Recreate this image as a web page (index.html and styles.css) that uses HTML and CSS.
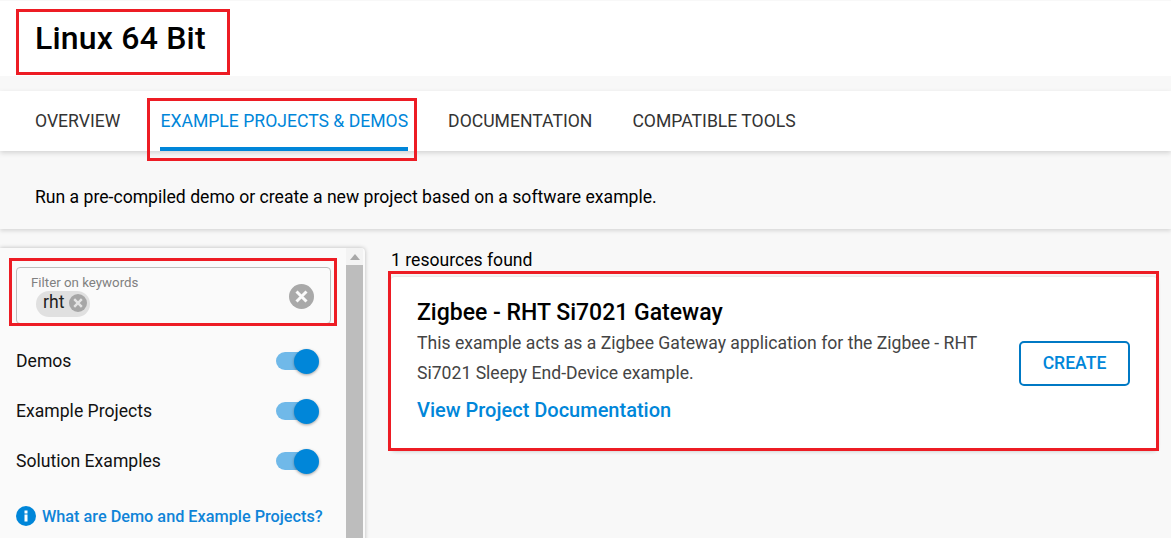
FILE: index.html
```html
<!DOCTYPE html>
<html>

<head>
    <title>Linux 64 Bit</title>
    <meta content="width=device-width, initial-scale=1" name="viewport" />
    <meta http-equiv="Content-Type" content="text/html; charset=utf-8" />
    <link rel="stylesheet" href="styles.css">
</head>

<body>
    <div id="contents">
        <div id="header">
            <h1>Linux 64 Bit</h1>
        </div>
        <div id="tabs">
            <a class="tab">OVERVIEW</a>
            <a class="tab active">EXAMPLE PROJECTS &amp; DEMOS</a>
            <a class="tab">DOCUMENTATION</a>
            <a class="tab">COMPATIBLE TOOLS</a>
        </div>
        <div id="intro">Run a pre-compiled demo or create a new project based on a software example.</div>
        <div id="main">
            <div id="sidebar">
                <div id="filters">
                    <div id="search">
                        <div id="search-left">
                            <label>Filter on keywords</label>
                            <span class="chip"><span class="chip-text">rht</span>
                                <svg class="chip-x" viewBox="0 0 18 18">
                                    <circle cx="9" cy="9" r="9" fill="#a6a6a6" />
                                    <path d="M5.2 5.2l7.6 7.6M12.8 5.2l-7.6 7.6" stroke="#e4e4e4" stroke-width="2.400" />
                                </svg>
                            </span>
                        </div>
                        <svg class="clear-x" viewBox="0 0 25 25">
                            <circle cx="12.5" cy="12.5" r="12.5" fill="#a9a9a9" />
                            <path d="M7.5 7.5l10 10M17.500 7.500l-10 10" stroke="#fafafa" stroke-width="3" />
                        </svg>
                    </div>
                    <div class="toggle-row">
                        <span>Demos</span>
                        <span class="toggle"><i></i></span>
                    </div>
                    <div class="toggle-row">
                        <span>Example Projects</span>
                        <span class="toggle"><i></i></span>
                    </div>
                    <div class="toggle-row">
                        <span>Solution Examples</span>
                        <span class="toggle"><i></i></span>
                    </div>
                    <a id="help">
                        <svg viewBox="0 0 20 20">
                            <circle cx="10" cy="10" r="10" fill="#0086d9" />
                            <rect x="8.500" y="8.500" width="3" height="7" fill="#fff" />
                            <rect x="8.500" y="4.500" width="3" height="3" fill="#fff" />
                        </svg>
                        What are Demo and Example Projects?
                    </a>
                </div>
                <div id="scrollbar">
                    <div id="scroll-up"></div>
                    <div id="scroll-thumb"></div>
                </div>
            </div>
            <div id="results">
                <p id="count">1 resources found</p>
                <div id="card">
                    <div id="card-text">
                        <h3>Zigbee - RHT Si7021 Gateway</h3>
                        <p>This example acts as a Zigbee Gateway application for the Zigbee - RHT Si7021 Sleepy End-Device example.</p>
                        <a>View Project Documentation</a>
                    </div>
                    <button id="create">CREATE</button>
                </div>
            </div>
        </div>

        <div class="mark" id="mark-title"></div>
        <div class="mark" id="mark-tab"></div>
        <div class="mark" id="mark-search"></div>
        <div class="mark" id="mark-card"></div>
    </div>
</body>

</html>
```

FILE: styles.css
```css
* {
    margin: 0;
    padding: 0;
    box-sizing: border-box;
}

html,
body {
    font-family: Roboto, 'Liberation Sans', sans-serif;
    height: 100%;
    width: 100%;
    overflow: hidden;
    background: #f8f8f8;
}

#contents {
    height: 538px;
    overflow: hidden;
    position: relative;
    width: 100%;
}

#header {
    align-items: center;
    background: white;
    display: flex;
    height: 75px;
    margin-top: 1px;
    padding: 0 0 2px 35px;
}

#header h1 {
    color: black;
    font-size: 32px;
    font-weight: 500;
    letter-spacing: 0.2px;
}

#tabs {
    background: white;
    box-shadow: 0 2px 5px rgba(0, 0, 0, 0.15);
    display: flex;
    gap: 40px;
    height: 60px;
    margin-top: 15px;
    padding-left: 35px;
    position: relative;
}

#tabs .tab {
    color: #333333;
    font-size: 17.6px;
    line-height: 60px;
}

#tabs .tab.active {
    border-bottom: 4px solid #0086d9;
    color: #0086d9;
}

#intro {
    box-shadow: 0 2px 4px rgba(0, 0, 0, 0.13);
    color: black;
    font-size: 17.6px;
    height: 78px;
    line-height: 92px;
    padding-left: 35px;
}

#main {
    display: flex;
    padding-top: 19px;
}

#sidebar {
    background: #fafafa;
    border-radius: 0 4px 0 0;
    box-shadow: 0 0 4px rgba(0, 0, 0, 0.25);
    display: flex;
    flex: none;
    height: 300px;
    width: 365px;
}

#filters {
    padding: 19px 0 0 16px;
    width: 346px;
}

#search {
    align-items: center;
    border: 1px solid #bdbdbd;
    border-radius: 4px;
    display: flex;
    height: 57px;
    justify-content: space-between;
    padding: 2px 16px 0 14px;
    width: 315px;
}

#search-left {
    display: flex;
    flex-direction: column;
    align-items: flex-start;
    margin-top: -1px;
}

#search label {
    color: #808080;
    display: block;
    font-size: 13.3px;
    line-height: 16px;
}

.chip {
    align-items: center;
    background: #e0e0e0;
    border-radius: 13px;
    color: #222222;
    display: flex;
    font-size: 17.6px;
    gap: 5px;
    height: 26px;
    margin-left: 5px;
    padding-left: 7px;
    width: 54px;
}

.chip-text {
    margin-top: -4px;
}

.chip-x {
    height: 18px;
    margin-top: -2px;
    width: 18px;
}

.clear-x {
    height: 25px;
    width: 25px;
}

.toggle-row {
    align-items: center;
    color: #111111;
    display: flex;
    font-size: 17.6px;
    height: 50px;
    justify-content: space-between;
    width: 296px;
}

#search + .toggle-row {
    margin-top: 12px;
}

.toggle {
    background: #70b9e9;
    border-radius: 9px;
    display: block;
    height: 18px;
    position: relative;
    width: 36px;
}

.toggle i {
    background: #0086d9;
    border-radius: 50%;
    box-shadow: 0 1px 3px rgba(0, 0, 0, 0.35);
    display: block;
    height: 25px;
    position: absolute;
    right: -7px;
    top: -3px;
    width: 25px;
}

#help {
    align-items: center;
    color: #0f84d8;
    display: flex;
    font-size: 16.25px;
    font-weight: 500;
    gap: 6px;
    margin-top: 20px;
}

#help svg {
    height: 20px;
    width: 20px;
}

#scrollbar {
    background: #f3f3f3;
    height: 100%;
    margin-left: 0;
    width: 17px;
}

#scroll-up {
    border-bottom: 6px solid #a8a8a8;
    border-left: 5px solid transparent;
    border-right: 5px solid transparent;
    height: 0;
    margin: 6px auto 0;
    width: 0;
}

#scroll-thumb {
    background: #bdbdbd;
    height: 100%;
    margin-top: 5px;
}

#results {
    flex: 1;
    padding: 0 14px 0 26px;
}

#count {
    color: black;
    font-size: 17.6px;
    line-height: 22px;
    padding-top: 1px;
}

#card {
    align-items: center;
    background: white;
    border-radius: 4px;
    box-shadow: 0 1px 4px rgba(0, 0, 0, 0.22);
    display: flex;
    height: 173px;
    justify-content: space-between;
    margin-top: 6px;
    padding: 0 27px 6px 26px;
}

#card-text {
    width: 575px;
}

#card h3 {
    color: black;
    font-size: 23px;
    font-weight: 500;
    line-height: 28px;
}

#card p {
    color: #444444;
    font-size: 17.6px;
    line-height: 30px;
    margin-top: 1px;
}

#card a {
    color: #0086d9;
    display: block;
    font-size: 20px;
    font-weight: 500;
    line-height: 26px;
    margin-top: 9px;
}

#create {
    background: white;
    border: 2px solid #0079c4;
    border-radius: 5px;
    color: #0086d9;
    font-family: inherit;
    font-size: 17.6px;
    font-weight: 500;
    height: 45px;
    margin-top: 6px;
    padding-bottom: 2px;
    width: 111px;
}

/* red annotation boxes on top of the page */
.mark {
    border: 3px solid #ed1c24;
    position: absolute;
}

#mark-title {
    height: 66px;
    left: 16px;
    top: 9px;
    width: 214px;
}

#mark-tab {
    height: 63px;
    left: 147px;
    top: 98px;
    width: 270px;
}

#mark-search {
    height: 68px;
    left: 9px;
    top: 258px;
    width: 328px;
}

#mark-card {
    height: 180px;
    left: 388px;
    top: 271px;
    width: 771px;
}
```
